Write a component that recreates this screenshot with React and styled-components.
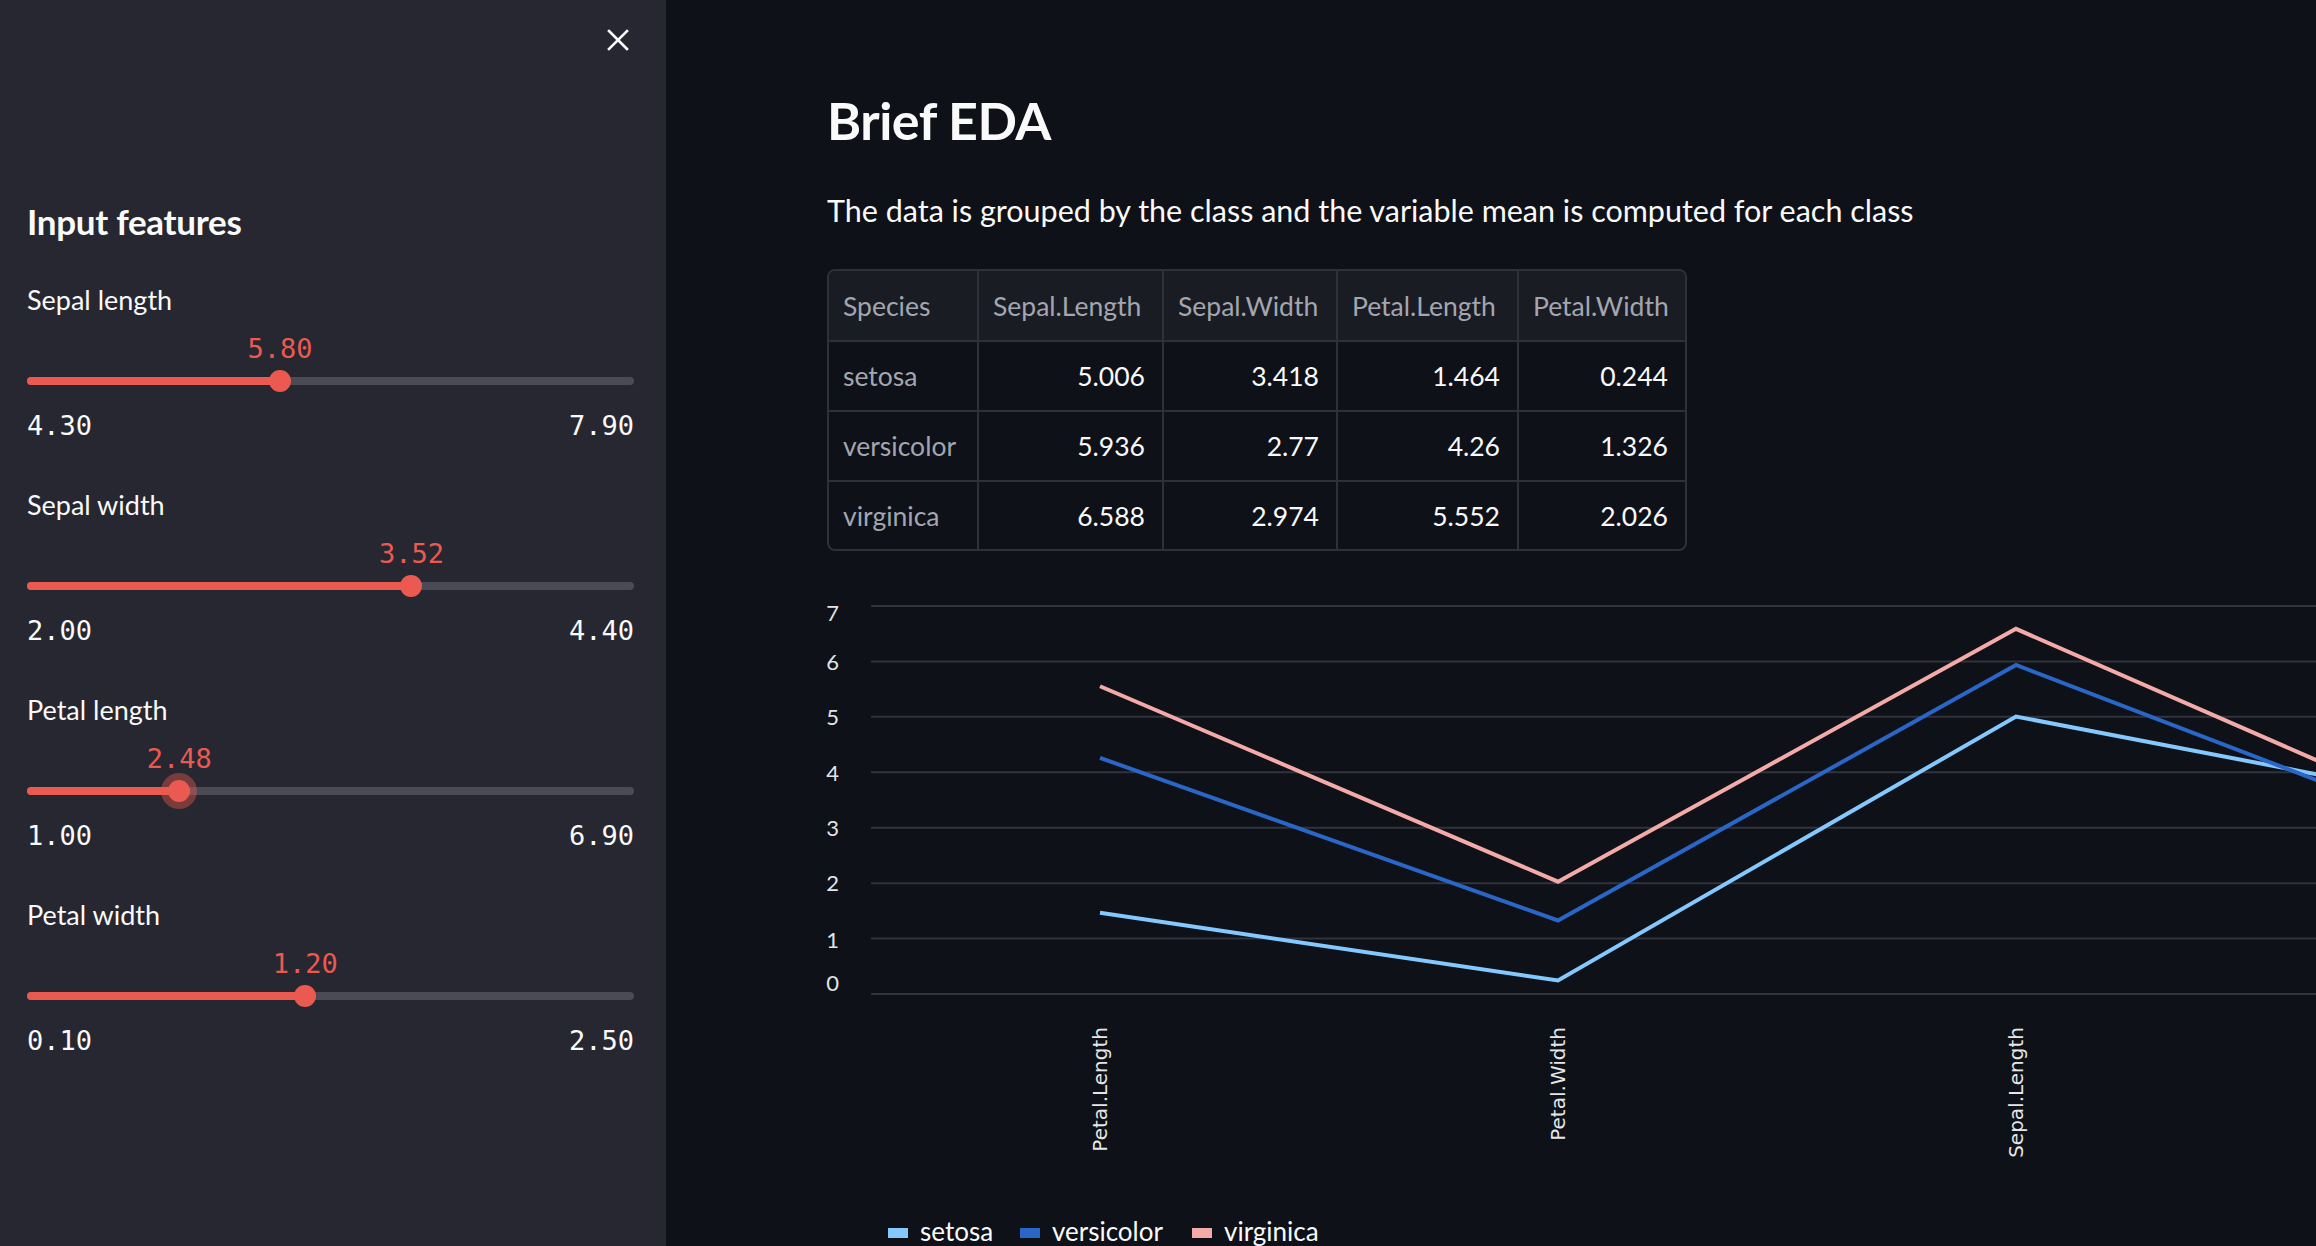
import React from "react"
import styled, { createGlobalStyle } from "styled-components"

const GlobalStyle = createGlobalStyle`
  html, body {
    margin: 0;
    padding: 0;
    height: 100%;
    overflow: hidden;
    background: #0e1117;
  }
  body {
    font-family: "Source Sans Pro", Lato, "Noto Sans", sans-serif;
    color: #fafafa;
  }
  * { box-sizing: border-box; }
`

const RED = "#eb5a51"

const sliders = [
  { label: "Sepal length", value: 5.8, min: 4.3, max: 7.9 },
  { label: "Sepal width", value: 3.52, min: 2.0, max: 4.4 },
  { label: "Petal length", value: 2.48, min: 1.0, max: 6.9, focused: true },
  { label: "Petal width", value: 1.2, min: 0.1, max: 2.5 },
]

const columns = ["Species", "Sepal.Length", "Sepal.Width", "Petal.Length", "Petal.Width"]
const colWidths = [149, 185, 174, 181, 167]
const rows = [
  ["setosa", "5.006", "3.418", "1.464", "0.244"],
  ["versicolor", "5.936", "2.77", "4.26", "1.326"],
  ["virginica", "6.588", "2.974", "5.552", "2.026"],
]

const categories = ["Petal.Length", "Petal.Width", "Sepal.Length", "Sepal.Width"]
const series = [
  { name: "setosa", color: "#83c9ff", values: [1.464, 0.244, 5.006, 3.418] },
  { name: "versicolor", color: "#2a66c8", values: [4.26, 1.326, 5.936, 2.77] },
  { name: "virginica", color: "#f4aaa8", values: [5.552, 2.026, 6.588, 2.974] },
]

const Page = styled.div`
  display: flex;
  height: 100vh;
  width: 100vw;
  overflow: hidden;
`

const Sidebar = styled.aside`
  width: 666px;
  flex-shrink: 0;
  background: #262730;
  padding: 0 32px 0 27px;
  display: flex;
  flex-direction: column;
`

const CloseRow = styled.div`
  height: 80px;
  display: flex;
  align-items: center;
  justify-content: flex-end;
  margin-right: 5px;
`

const CloseButton = styled.button`
  background: none;
  border: none;
  padding: 0;
  width: 22px;
  height: 22px;
  display: flex;
  cursor: pointer;
`

const SideHeading = styled.h2`
  margin: 121px 0 40px;
  font-size: 35px;
  line-height: 41px;
  font-weight: 700;
  letter-spacing: -0.3px;
`

const SliderBlock = styled.div`
  display: flex;
  flex-direction: column;
  margin-bottom: 46px;
`

const SliderLabel = styled.div`
  font-size: 27px;
  line-height: 36px;
  height: 36px;
`

const ValueRow = styled.div`
  position: relative;
  height: 30px;
  margin-top: 16px;
`

const ValueText = styled.span`
  position: absolute;
  top: 0;
  transform: translateX(-50%);
  font-family: "DejaVu Sans Mono", "Liberation Mono", monospace;
  font-size: 27px;
  line-height: 30px;
  color: ${RED};
`

const TrackArea = styled.div`
  height: 24px;
  margin-top: 5px;
  display: flex;
  align-items: center;
`

const Rail = styled.div`
  position: relative;
  width: 100%;
  height: 8px;
  border-radius: 4px;
  background: #4a4b55;
`

const Fill = styled.div`
  height: 100%;
  border-radius: 4px;
  background: ${RED};
`

const Thumb = styled.div`
  position: absolute;
  top: 50%;
  width: 22px;
  height: 22px;
  margin: -11px 0 0 -11px;
  border-radius: 50%;
  background: ${RED};
  box-shadow: ${(p) => (p.$focused ? "0 0 0 7px rgba(235, 90, 81, 0.42)" : "none")};
`

const Ticks = styled.div`
  display: flex;
  justify-content: space-between;
  margin-top: 18px;
  font-family: "DejaVu Sans Mono", "Liberation Mono", monospace;
  font-size: 27px;
  line-height: 30px;
`

const Main = styled.main`
  flex: 1;
  min-width: 0;
  overflow: hidden;
  padding: 89px 0 0 161px;
`

const Title = styled.h1`
  margin: 0;
  font-size: 52px;
  line-height: 62px;
  font-weight: 700;
  letter-spacing: -0.5px;
`

const Paragraph = styled.p`
  margin: 37px 0 0;
  font-size: 30.5px;
  line-height: 44px;
`

const TableWrap = styled.div`
  margin-top: 37px;
  width: fit-content;
  border: 2px solid #2f313a;
  border-radius: 8px;
  overflow: hidden;
`

const Table = styled.table`
  width: 856px;
  border-collapse: collapse;
  table-layout: fixed;
  font-size: 26.5px;
`

const HeadCell = styled.th`
  height: 70px;
  padding: 0 12px 0 14px;
  text-align: left;
  font-weight: 400;
  color: #a3a6b0;
  background: #1a1c23;
  border-right: 2px solid #2f313a;
  border-bottom: 2px solid #2f313a;
  white-space: nowrap;
  &:last-child { border-right: none; }
`

const Cell = styled.td`
  height: 70px;
  padding: 0 17px 0 14px;
  text-align: ${(p) => (p.$index ? "left" : "right")};
  color: ${(p) => (p.$index ? "#a3a6b0" : "#fafafa")};
  border-right: 2px solid #2f313a;
  border-bottom: 2px solid #2f313a;
  white-space: nowrap;
  &:last-child { border-right: none; }
  tr:last-child > & { border-bottom: none; height: 68px; }
`

const ChartSvg = styled.svg`
  display: block;
  margin-top: 29px;
  overflow: visible;
`

function CloseIcon() {
  return (
    <svg width="22" height="22" viewBox="0 0 22 22">
      <path d="M2 2 L20 20 M20 2 L2 20" stroke="#fafafa" strokeWidth="2.6" strokeLinecap="square" />
    </svg>
  )
}

function Slider({ label, value, min, max, focused }) {
  const pct = ((value - min) / (max - min)) * 100
  return (
    <SliderBlock>
      <SliderLabel>{label}</SliderLabel>
      <ValueRow>
        <ValueText style={{ left: `${pct}%` }}>{value.toFixed(2)}</ValueText>
      </ValueRow>
      <TrackArea>
        <Rail>
          <Fill style={{ width: `${pct}%` }} />
          <Thumb $focused={focused} style={{ left: `${pct}%` }} />
        </Rail>
      </TrackArea>
      <Ticks>
        <span>{min.toFixed(2)}</span>
        <span>{max.toFixed(2)}</span>
      </Ticks>
    </SliderBlock>
  )
}

// chart geometry (svg origin = left edge of content column)
const PLOT_LEFT = 44
const PLOT_RIGHT = 1876
const BASE_Y = 414
const UNIT = 55.43
const STEP = 458
const yOf = (v) => BASE_Y - v * UNIT
const xOf = (i) => PLOT_LEFT + STEP / 2 + i * STEP
const yLabelCenter = [403, 360, 303, 248, 193, 137, 82, 33]

function LineChart() {
  return (
    <ChartSvg width="1900" height="680" viewBox="0 0 1900 680">
      {[0, 1, 2, 3, 4, 5, 6, 7].map((v) => (
        <g key={v}>
          <line x1={PLOT_LEFT} x2={PLOT_RIGHT} y1={yOf(v)} y2={yOf(v)} stroke="#31333d" strokeWidth="2" />
          <text
            x="12"
            y={yLabelCenter[v] + 8}
            textAnchor="end"
            fill="#e2e3e6"
            fontSize="22"
            fontFamily="'Source Sans Pro', Lato, sans-serif"
          >
            {v}
          </text>
        </g>
      ))}
      {series.map((s) => (
        <polyline
          key={s.name}
          points={s.values.map((v, i) => `${xOf(i)},${yOf(v)}`).join(" ")}
          fill="none"
          stroke={s.color}
          strokeWidth="4"
          strokeLinejoin="miter"
        />
      ))}
      {categories.map((c, i) => (
        <text
          key={c}
          transform={`translate(${xOf(i) + 1}, 447) rotate(-90)`}
          textAnchor="end"
          dominantBaseline="middle"
          fill="#e6e6e8"
          fontSize="20"
          fontFamily="'DejaVu Sans', Verdana, sans-serif"
        >
          {c}
        </text>
      ))}
      {series.map((s, i) => {
        const x = [61, 193, 365][i]
        return (
          <g key={s.name}>
            <rect x={x} y="648" width="20" height="10" fill={s.color} />
            <text x={x + 32} y="661" fill="#fafafa" fontSize="26" fontFamily="'Source Sans Pro', Lato, sans-serif">
              {s.name}
            </text>
          </g>
        )
      })}
    </ChartSvg>
  )
}

export default function App() {
  return (
    <>
      <GlobalStyle />
      <Page>
        <Sidebar>
          <CloseRow>
            <CloseButton aria-label="Close sidebar">
              <CloseIcon />
            </CloseButton>
          </CloseRow>
          <SideHeading>Input features</SideHeading>
          {sliders.map((s) => (
            <Slider key={s.label} {...s} />
          ))}
        </Sidebar>
        <Main>
          <Title>Brief EDA</Title>
          <Paragraph>The data is grouped by the class and the variable mean is computed for each class</Paragraph>
          <TableWrap>
            <Table>
              <colgroup>
                {colWidths.map((w, i) => (
                  <col key={i} style={{ width: w }} />
                ))}
              </colgroup>
              <thead>
                <tr>
                  {columns.map((c) => (
                    <HeadCell key={c}>{c}</HeadCell>
                  ))}
                </tr>
              </thead>
              <tbody>
                {rows.map((r) => (
                  <tr key={r[0]}>
                    {r.map((v, i) => (
                      <Cell key={i} $index={i === 0}>
                        {v}
                      </Cell>
                    ))}
                  </tr>
                ))}
              </tbody>
            </Table>
          </TableWrap>
          <LineChart />
        </Main>
      </Page>
    </>
  )
}
